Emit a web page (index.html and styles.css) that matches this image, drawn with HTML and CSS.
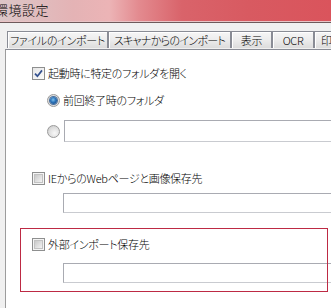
FILE: index.html
```html
<!DOCTYPE html>
<html>
<head>
  <title>環境設定</title>
  <link rel="stylesheet" href="styles.css">
</head>
<body>
  <div class="titlebar">
    <span class="title">環境設定</span>
  </div>

  <div class="dialog">
    <div class="tabs">
      <div class="tab tab-file">ファイルのインポート</div>
      <div class="tab tab-scan">スキャナからのインポート</div>
      <div class="tab tab-view">表示</div>
      <div class="tab tab-ocr">OCR</div>
      <div class="tab tab-print">印刷</div>
    </div>

    <div class="panel">
      <div class="row check-row">
        <span class="box box-checked">
          <svg width="9" height="9" viewBox="0 0 9 9"><path d="M1 4.6 L3.4 7.2 L8 1.4" stroke="#34518f" stroke-width="1.7" fill="none"/></svg>
        </span>
        <span class="label">起動時に特定のフォルダを開く</span>
      </div>

      <div class="row radio-row">
        <span class="radio radio-checked"><span class="dot"></span></span>
        <span class="label">前回終了時のフォルダ</span>
      </div>

      <div class="row radio-row path-row">
        <span class="radio"></span>
        <div class="field"></div>
      </div>

      <div class="row check-row section-row">
        <span class="box"><span class="box-inner"></span></span>
        <span class="label">IEからのWebページと画像保存先</span>
      </div>

      <div class="row field-row">
        <div class="field field-short"></div>
      </div>

      <div class="row check-row outside-row">
        <span class="box"><span class="box-inner"></span></span>
        <span class="label">外部インポート保存先</span>
      </div>

      <div class="row field-row outside-field">
        <div class="field field-short"></div>
      </div>

      <!-- annotation frame drawn over the last group -->
      <div class="highlight"></div>
    </div>
  </div>
</body>
</html>
```

FILE: styles.css
```css
body {
  margin: 0;
  padding: 0;
  width: 331px;
  height: 308px;
  overflow: hidden;
  background-color: #f0f0f0;
  font-family: "Noto Sans CJK JP", "Noto Sans", sans-serif;
  font-size: 11px;
  font-weight: 300;
  letter-spacing: -0.3px;
  font-feature-settings: "palt";
  color: #000000;
}

.titlebar {
  height: 22px;
  background: linear-gradient(to right, #dcc6c7 0%, #e4b3b5 22%, #ecb4b6 33%, #e38a8f 42%, #d9636a 55%, #d85a61 75%, #da545c 100%);
  border-bottom: 1px solid #6e5a5b;
  box-shadow: inset 0 -1px 0 #e9c4c6;
}

.title {
  display: block;
  margin-left: -5px;
  line-height: 20px;
  font-size: 13px;
  letter-spacing: 0.5px;
}

.dialog {
  padding-top: 8px;
}

.tabs {
  display: flex;
  margin-left: 7px;
  height: 18px;
}

.tab {
  flex: none;
  display: flex;
  justify-content: center;
  height: 17px;
  line-height: 17px;
  white-space: nowrap;
  border: 1px solid #898c95;
  border-bottom: none;
  background: linear-gradient(to bottom, #f6f6f6 0%, #ececec 50%, #dcdcdc 100%);
  box-shadow: inset 1px 1px 0 #ffffff;
  box-sizing: border-box;
}

.tab-file {
  width: 101px;
}

.tab-scan {
  width: 123px;
  letter-spacing: -0.7px;
}

.tab-view {
  width: 41px;
}

.tab-ocr {
  width: 42px;
}

.tab-print {
  width: 40px;
  justify-content: flex-start;
  padding-left: 6px;
}

.panel {
  position: relative;
  margin-left: 5px;
  width: 400px;
  height: 300px;
  background-color: #ffffff;
  border-left: 1px solid #9c9c9c;
  border-top: 1px solid #898c95;
  padding: 14px 0 0 26px;
  box-sizing: border-box;
}

.row {
  display: flex;
  align-items: center;
  height: 18px;
}

.label {
  margin-left: 3px;
  line-height: 18px;
  white-space: nowrap;
}

.radio-row {
  margin-top: 9px;
  padding-left: 15px;
}

.path-row {
  margin-top: 11px;
  height: 22px;
}

.section-row {
  margin-top: 27px;
}

.field-row {
  margin-top: 6px;
  height: 20px;
  padding-left: 31px;
}

.outside-row {
  margin-top: 22px;
}

.outside-field {
  margin-top: 10px;
}

.box {
  flex: none;
  display: flex;
  align-items: center;
  justify-content: center;
  width: 11px;
  height: 11px;
  border: 1px solid #8e8f8f;
  background-color: #f4f4f4;
}

.box-inner {
  width: 7px;
  height: 7px;
  border: 1px solid #c2c2c2;
  background: linear-gradient(135deg, #c9c9c9 0%, #e2e2e2 60%, #f3f3f3 100%);
}

.box-checked {
  background: linear-gradient(135deg, #e6e6e6 0%, #fbfbfb 100%);
}

.radio {
  flex: none;
  display: flex;
  align-items: center;
  justify-content: center;
  width: 11px;
  height: 11px;
  border: 1px solid #9a9a9a;
  border-radius: 50%;
  background: radial-gradient(circle at 60% 65%, #f8f8f8 0%, #dedede 55%, #c4c4c4 100%);
}

.radio-checked {
  background: radial-gradient(circle at 50% 50%, #f0f0f0 0%, #d6d6d6 100%);
}

.dot {
  width: 7px;
  height: 7px;
  border-radius: 50%;
  background: radial-gradient(circle at 45% 40%, #7fc1ee 0%, #2a72b8 45%, #123f7a 100%);
  box-shadow: 0 0 0 1px #4a6f9c;
}

.field {
  flex: none;
  margin-left: 4px;
  width: 300px;
  height: 20px;
  border: 1px solid #a9abb2;
  border-bottom-color: #c9cbd0;
  background-color: #ffffff;
}

.field-short {
  margin-left: 0;
  height: 18px;
}

.highlight {
  position: absolute;
  left: 14px;
  top: 178px;
  width: 306px;
  height: 62px;
  border: 1px solid #bd2a44;
}
```
